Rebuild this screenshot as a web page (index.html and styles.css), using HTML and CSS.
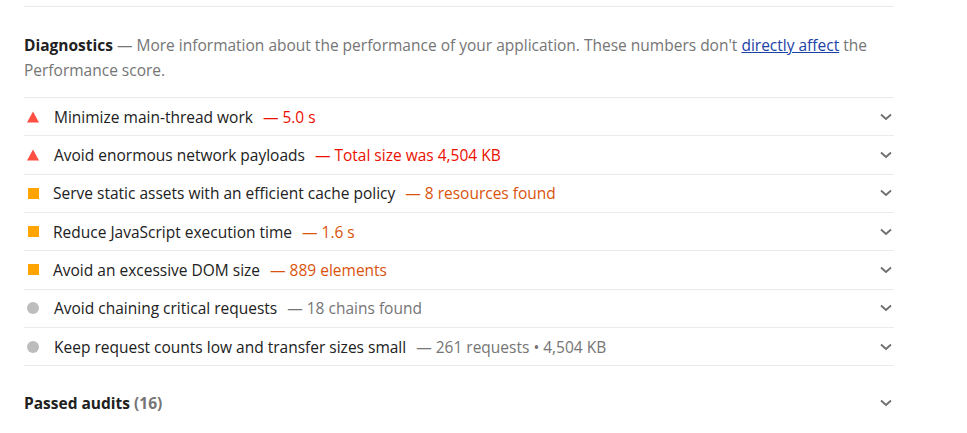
FILE: index.html
```html
<!DOCTYPE html>
<html>
<head>
<meta charset="utf-8">
<link rel="stylesheet" href="styles.css">
</head>
<body>
<div class="group">
  <div class="group-header">
    <p class="group-text"><b class="group-title">Diagnostics</b> — More information about the performance of your application. These numbers don't <a href="#">directly affect</a> the Performance score.</p>
  </div>
  <div class="audits">
    <div class="audit">
      <span class="icon tri"><svg width="12" height="12" viewBox="0 0 12 12"><path d="M6 0.5 L12 11.5 L0 11.5 Z" fill="#ff4e42"/></svg></span>
      <span class="title">Minimize main-thread work</span><span class="value fail">— 5.0 s</span>
      <svg class="chev" width="12" height="8" viewBox="0 0 12 8"><path d="M1 1.5 L6 6 L11 1.5" fill="none" stroke="#6e6e6e" stroke-width="1.8"/></svg>
    </div>
    <div class="audit">
      <span class="icon tri"><svg width="12" height="12" viewBox="0 0 12 12"><path d="M6 0.5 L12 11.5 L0 11.5 Z" fill="#ff4e42"/></svg></span>
      <span class="title">Avoid enormous network payloads</span><span class="value fail">— Total size was 4,504 KB</span>
      <svg class="chev" width="12" height="8" viewBox="0 0 12 8"><path d="M1 1.5 L6 6 L11 1.5" fill="none" stroke="#6e6e6e" stroke-width="1.8"/></svg>
    </div>
    <div class="audit">
      <span class="icon sq"></span>
      <span class="title">Serve static assets with an efficient cache policy</span><span class="value avg">— 8 resources found</span>
      <svg class="chev" width="12" height="8" viewBox="0 0 12 8"><path d="M1 1.5 L6 6 L11 1.5" fill="none" stroke="#6e6e6e" stroke-width="1.8"/></svg>
    </div>
    <div class="audit">
      <span class="icon sq"></span>
      <span class="title">Reduce JavaScript execution time</span><span class="value avg">— 1.6 s</span>
      <svg class="chev" width="12" height="8" viewBox="0 0 12 8"><path d="M1 1.5 L6 6 L11 1.5" fill="none" stroke="#6e6e6e" stroke-width="1.8"/></svg>
    </div>
    <div class="audit">
      <span class="icon sq"></span>
      <span class="title">Avoid an excessive DOM size</span><span class="value avg">— 889 elements</span>
      <svg class="chev" width="12" height="8" viewBox="0 0 12 8"><path d="M1 1.5 L6 6 L11 1.5" fill="none" stroke="#6e6e6e" stroke-width="1.8"/></svg>
    </div>
    <div class="audit">
      <span class="icon dot"></span>
      <span class="title">Avoid chaining critical requests</span><span class="value info">— 18 chains found</span>
      <svg class="chev" width="12" height="8" viewBox="0 0 12 8"><path d="M1 1.5 L6 6 L11 1.5" fill="none" stroke="#6e6e6e" stroke-width="1.8"/></svg>
    </div>
    <div class="audit">
      <span class="icon dot"></span>
      <span class="title">Keep request counts low and transfer sizes small</span><span class="value info">— 261 requests • 4,504 KB</span>
      <svg class="chev" width="12" height="8" viewBox="0 0 12 8"><path d="M1 1.5 L6 6 L11 1.5" fill="none" stroke="#6e6e6e" stroke-width="1.8"/></svg>
    </div>
  </div>
  <div class="passed">
    <span class="passed-title">Passed audits <span class="count">(16)</span></span>
    <svg class="chev" width="12" height="8" viewBox="0 0 12 8"><path d="M1 1.5 L6 6 L11 1.5" fill="none" stroke="#6e6e6e" stroke-width="1.8"/></svg>
  </div>
</div>
</body>
</html>
```
FILE: styles.css
```css
html, body {
  margin: 0;
  padding: 0;
  background: #ffffff;
}
body {
  font-family: "Open Sans", "Noto Sans", sans-serif;
  font-size: 15.5px;
  color: #212121;
}
.group {
  width: 870px;
  margin: 6px 0 0 24px;
  border-top: 1px solid #ebebeb;
}
.group-header {
  padding: 26px 0 14px 0;
}
.group-text {
  margin: 0;
  line-height: 25px;
  color: #757575;
}
.group-title {
  font-weight: 700;
  color: #212121;
}
.group-text a {
  color: #1a42a6;
  text-decoration: underline;
}
.audit {
  display: flex;
  align-items: center;
  border-top: 1px solid #ebebeb;
  height: 37.33px;
  line-height: 20px;
}
.icon {
  flex: none;
  display: flex;
  align-items: center;
  justify-content: center;
  width: 12px;
  height: 12px;
  margin: 0 15px 0 3px;
}
.icon.sq::before {
  content: "";
  width: 11px;
  height: 11px;
  background: #ffa400;
}
.icon.sq {
  margin-right: 14px;
}
.icon.dot::before {
  content: "";
  width: 12px;
  height: 12px;
  border-radius: 50%;
  background: #bdbdbd;
}
.title {
  color: #212121;
}
.value {
  margin-left: 10px;
}
.value.fail { color: #eb0f00; }
.value.avg { color: #d9530c; }
.value.info { color: #757575; }
.chev {
  flex: none;
  margin-left: auto;
  margin-right: 2px;
}
.audits {
  border-bottom: 1px solid #ebebeb;
}
.passed {
  display: flex;
  align-items: center;
  height: 74px;
}
.passed-title {
  font-weight: 700;
  color: #212121;
}
.passed-title .count {
  color: #757575;
}
```
